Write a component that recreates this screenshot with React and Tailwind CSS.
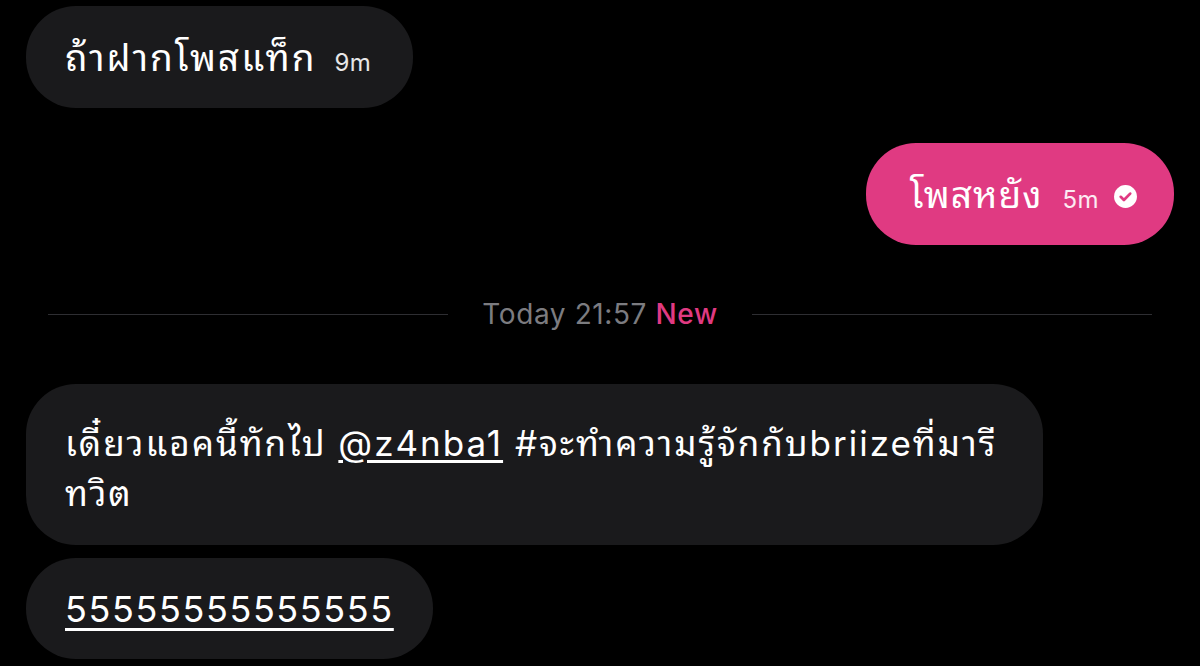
function CheckBadge() {
  return (
    <svg width="25" height="25" viewBox="0 0 24 24" className="shrink-0">
      <circle cx="12" cy="12" r="11" fill="#ffffff" />
      <path d="M7.4 12.3l3.1 3.1 6-6.2" fill="none" stroke="#e03a82" strokeWidth="2.6" strokeLinecap="round" strokeLinejoin="round" />
    </svg>
  );
}

function Bubble({ children, className = '' }) {
  return (
    <div className={`rounded-[50px] bg-[#1a1a1c] text-white ${className}`}>
      {children}
    </div>
  );
}

export default function App() {
  return (
    <div
      className="flex h-[666px] w-[1200px] flex-col overflow-hidden bg-black px-[26px] pt-[6px] text-white"
      style={{ fontFamily: 'Inter, "Noto Sans Thai Looped", Loma, Garuda, "Noto Sans Thai", "Noto Sans", sans-serif' }}
    >
      <Bubble className="flex h-[102px] items-center self-start pl-[39px] pr-[42px]">
        <span className="text-[37px] leading-none tracking-[2px]">ถ้าฝากโพสแท็ก</span>
        <span className="ml-[18px] mt-[12px] text-[24px] leading-none tracking-[0.5px] text-white/90">9m</span>
      </Bubble>

      <div className="mt-[35px] flex h-[102px] items-center self-end rounded-[50px] bg-[#e03a82] pl-[44px] pr-[36px]">
        <span className="text-[37px] leading-none tracking-[1px]">โพสหยัง</span>
        <span className="ml-[20px] mt-[12px] text-[24px] leading-none tracking-[0.5px] text-white/90">5m</span>
        <span className="ml-[14px] mt-[4px]">
          <CheckBadge />
        </span>
      </div>

      <div className="mt-[52px] flex items-center">
        <div className="ml-[22px] h-px flex-1 bg-[#2e2e32]" />
        <div className="px-[34px] text-[28px] leading-[34px] tracking-[0.6px]">
          <span className="text-[#7c7c80]">Today 21:57 </span>
          <span className="font-medium text-[#e03a82]">New</span>
        </div>
        <div className="mr-[22px] h-px flex-1 bg-[#2e2e32]" />
      </div>

      <Bubble className="mt-[53px] w-[1017px] rounded-[44px] pb-[27px] pl-[39px] pr-[10px] pt-[34px]">
        <p className="text-[35px] leading-[50px] tracking-[2px]">
          เดี๋ยวแอคนี้ทักไป <span className="underline underline-offset-4">@z4nba1</span> #จะทำความรู้จักกับbriizeที่มารี
          <br />
          ทวิต
        </p>
      </Bubble>

      <Bubble className="mt-[13px] flex h-[101px] items-center self-start pl-[39px] pr-[39px]">
        <span className="text-[36px] leading-none tracking-[1.6px] underline underline-offset-[6px]">55555555555555</span>
      </Bubble>
    </div>
  );
}
